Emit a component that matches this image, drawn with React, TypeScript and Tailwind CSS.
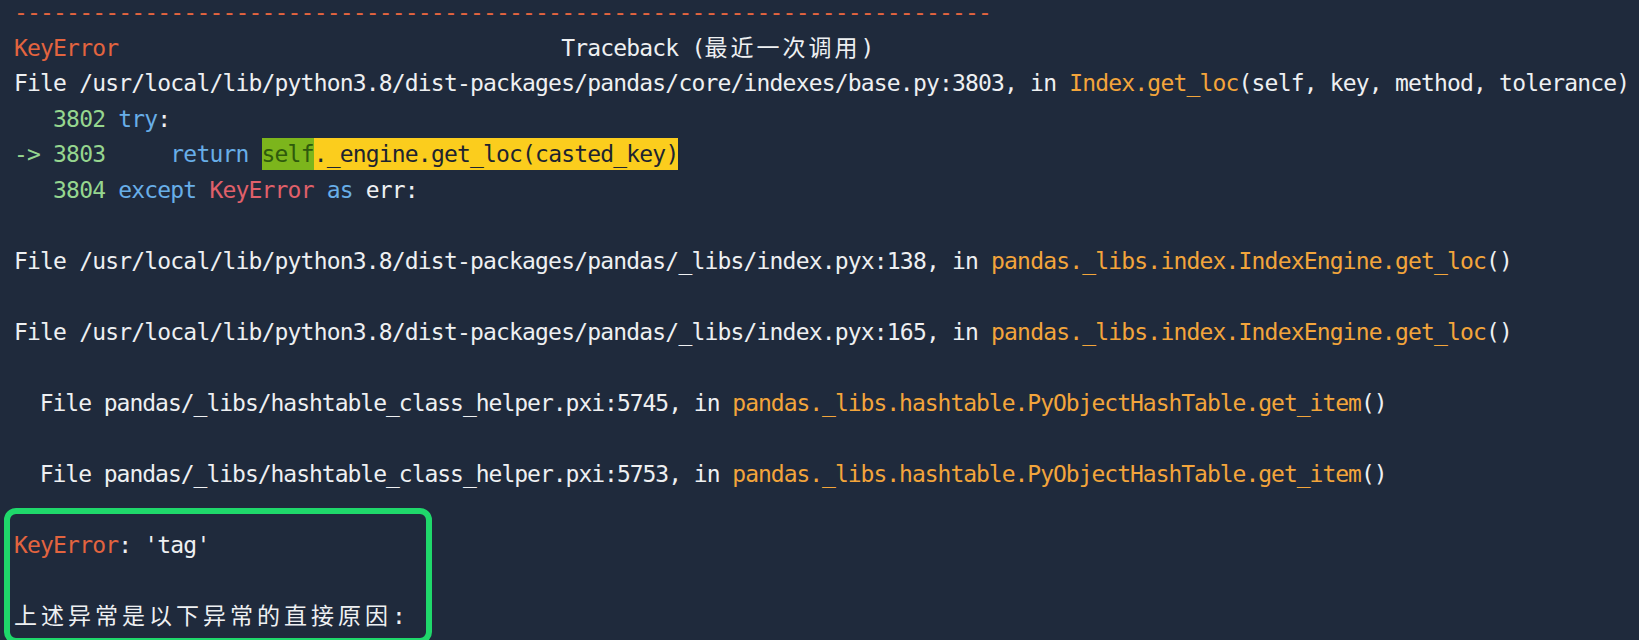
import React from "react";

const Line = ({ children, className = "" }: { children?: React.ReactNode; className?: string }) => (
  <div className={"h-[35.5px] leading-[35.5px] whitespace-pre " + className}>{children}</div>
);

export default function App() {
  const dashes = "-".repeat(75);
  return (
    <div
      className="w-[1639px] h-[640px] overflow-hidden bg-[#1f2a3c] text-[#eef0f2] text-[23px] tracking-[-0.82px]"
      style={{ fontFamily: '"DejaVu Sans Mono", "Noto Sans CJK SC", monospace' }}
    >
      <div className="-mt-[5px] pl-[14px]">
        <Line>
          <span className="text-[#e3643f]">{dashes}</span>
        </Line>
        <Line>
          <span className="text-[#e3643f]">KeyError</span>
          {"                                  Traceback ("}
          <span className="tracking-[3px]">最近一次调用</span>
          {")"}
        </Line>
        <Line>
          {"File /usr/local/lib/python3.8/dist-packages/pandas/core/indexes/base.py:3803, in "}
          <span className="text-[#f3a53b]">Index.get_loc</span>
          {"(self, key, method, tolerance)"}
        </Line>
        <Line>
          {"   "}
          <span className="text-[#96d68f]">3802</span> <span className="text-[#68aee8]">try</span>:
        </Line>
        <Line>
          <span className="text-[#96d68f]">{"-> 3803"}</span>
          {"     "}
          <span className="text-[#68aee8]">return</span>{" "}
          <span className="bg-[#7cb51c] text-[#2e5a0c] py-[3px]">self</span>
          <span className="bg-[#fbcd1d] text-[#1d2430] py-[3px]">._engine.get_loc(casted_key)</span>
        </Line>
        <Line>
          {"   "}
          <span className="text-[#96d68f]">3804</span> <span className="text-[#68aee8]">except</span>{" "}
          <span className="text-[#e0606a]">KeyError</span> <span className="text-[#68aee8]">as</span> err:
        </Line>
        <Line />
        <Line>
          {"File /usr/local/lib/python3.8/dist-packages/pandas/_libs/index.pyx:138, in "}
          <span className="text-[#f3a53b]">pandas._libs.index.IndexEngine.get_loc</span>
          {"()"}
        </Line>
        <Line />
        <Line>
          {"File /usr/local/lib/python3.8/dist-packages/pandas/_libs/index.pyx:165, in "}
          <span className="text-[#f3a53b]">pandas._libs.index.IndexEngine.get_loc</span>
          {"()"}
        </Line>
        <Line />
        <Line className="tracking-[-1.02px]">
          {"  File pandas/_libs/hashtable_class_helper.pxi:5745, in "}
          <span className="text-[#f3a53b]">pandas._libs.hashtable.PyObjectHashTable.get_item</span>
          {"()"}
        </Line>
        <Line />
        <Line className="tracking-[-1.02px]">
          {"  File pandas/_libs/hashtable_class_helper.pxi:5753, in "}
          <span className="text-[#f3a53b]">pandas._libs.hashtable.PyObjectHashTable.get_item</span>
          {"()"}
        </Line>
        <div className="mt-[16px] -ml-[10.5px] w-[428px] border-[6px] border-[#1fd86b] rounded-[12px] pl-[4.5px] pt-[13.5px] pb-[4px]">
          <Line>
            <span className="text-[#e3643f]">KeyError</span>: 'tag'
          </Line>
          <Line />
          <Line>
            <span className="tracking-[4px]">上述异常是以下异常的直接原因</span>:
          </Line>
        </div>
      </div>
    </div>
  );
}
